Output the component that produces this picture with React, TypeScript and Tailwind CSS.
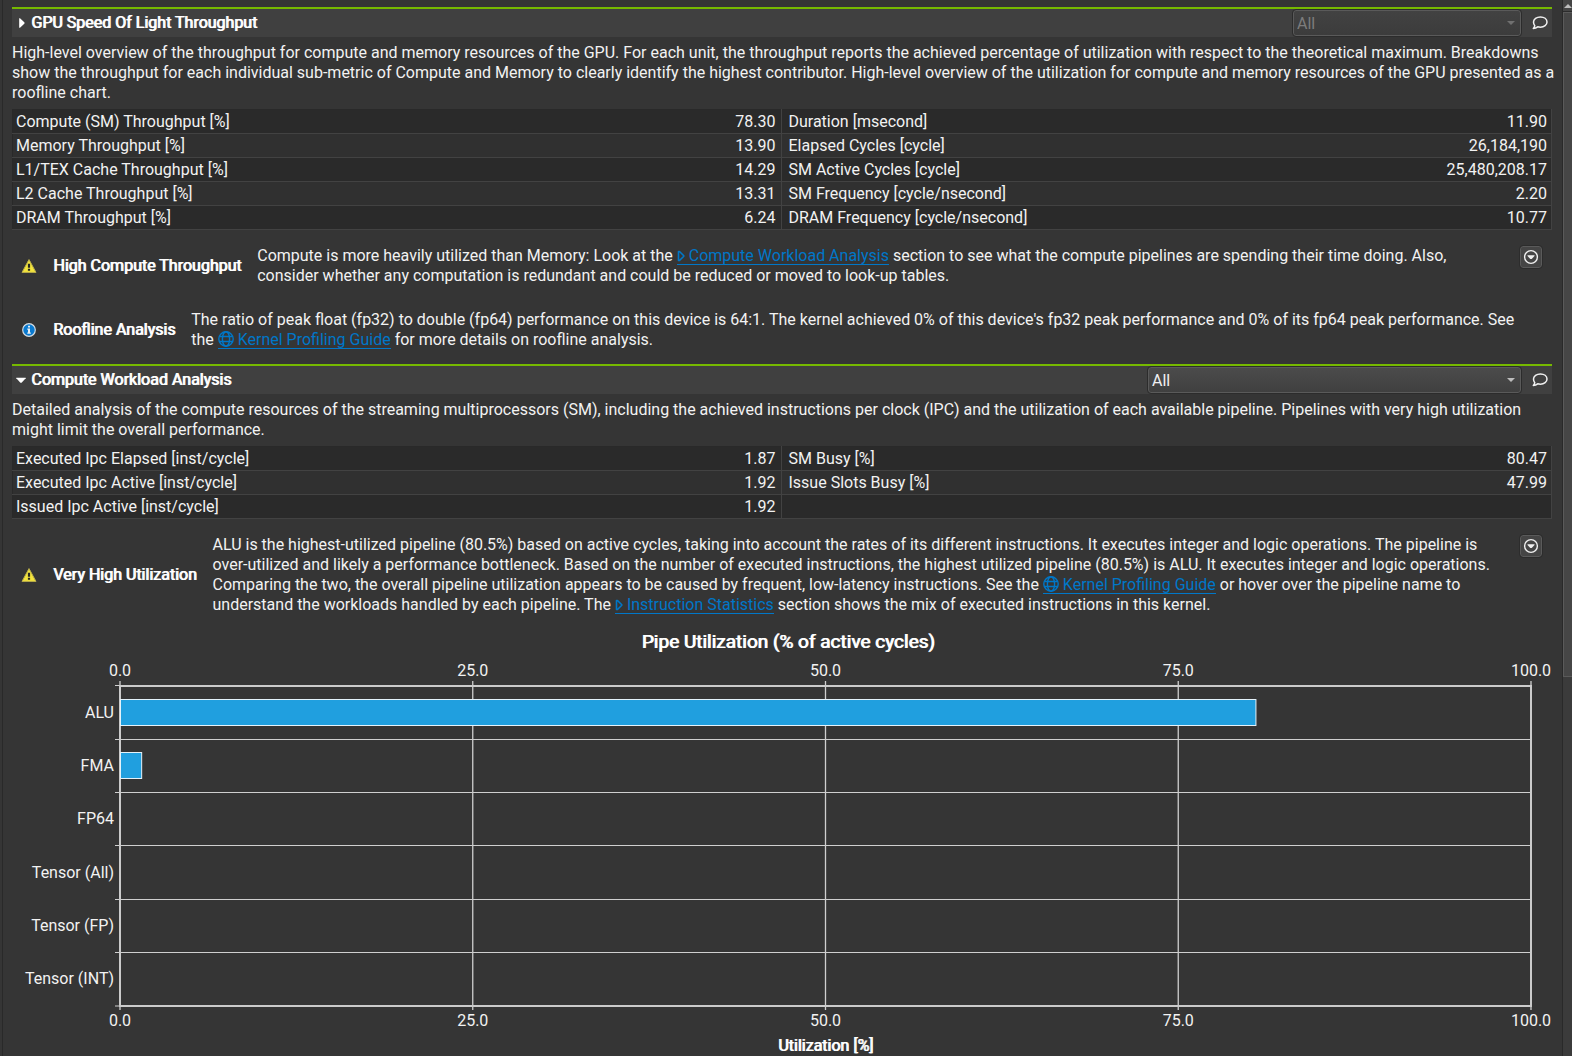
import type { ReactNode } from "react";

type Row = [string, string, string, string];

const lightRows: Row[] = [
  ["Compute (SM) Throughput [%]", "78.30", "Duration [msecond]", "11.90"],
  ["Memory Throughput [%]", "13.90", "Elapsed Cycles [cycle]", "26,184,190"],
  ["L1/TEX Cache Throughput [%]", "14.29", "SM Active Cycles [cycle]", "25,480,208.17"],
  ["L2 Cache Throughput [%]", "13.31", "SM Frequency [cycle/nsecond]", "2.20"],
  ["DRAM Throughput [%]", "6.24", "DRAM Frequency [cycle/nsecond]", "10.77"],
];

const computeRows: Row[] = [
  ["Executed Ipc Elapsed [inst/cycle]", "1.87", "SM Busy [%]", "80.47"],
  ["Executed Ipc Active [inst/cycle]", "1.92", "Issue Slots Busy [%]", "47.99"],
  ["Issued Ipc Active [inst/cycle]", "1.92", "", ""],
];

const pipes = [
  { name: "ALU", value: 80.47 },
  { name: "FMA", value: 1.5 },
  { name: "FP64", value: 0 },
  { name: "Tensor (All)", value: 0 },
  { name: "Tensor (FP)", value: 0 },
  { name: "Tensor (INT)", value: 0 },
];

const ticks = [0, 25, 50, 75, 100];

// Double-struck regular weight, the way the tool's headings are emboldened.
const strong = "font-normal text-white [text-shadow:1px_0_currentColor]";

function CommentIcon() {
  return (
    <svg width="16" height="14" viewBox="0 0 16 14" fill="none" stroke="#f0f0f0" strokeWidth="1.5" strokeLinejoin="round">
      <path d="M8.400 .9c3.800 0 6.600 2.200 6.600 5.100s-2.800 5.200-6.600 5.200c-1 0-1.900-.1-2.700-.4-1.100.9-2.600 1.600-4.400 1.700.8-.8 1.300-1.700 1.500-2.800C1.900 8.700 1.500 7.500 1.500 6 1.500 3.100 4.600.9 8.400.9Z" />
    </svg>
  );
}

function WarningIcon() {
  return (
    <svg width="16" height="16" viewBox="0 0 16 16" aria-label="Warning">
      <path d="M8 1.600 15 14.400H1Z" fill="#f3e43c" stroke="#b9ad4a" strokeWidth="1" strokeLinejoin="round" />
      <path d="M6.900 5.800h2.200v4H6.900ZM6.900 10.800h2.200v2H6.900Z" fill="#2a2a20" />
    </svg>
  );
}

function InfoIcon() {
  return (
    <svg width="16" height="16" viewBox="0 0 16 16" aria-label="Information">
      <circle cx="8" cy="8" r="6.300" fill="#0a7ad0" stroke="#d5dde3" strokeWidth="1.200" />
      <path d="M7 3.800h2v1.800H7ZM6.300 6.600H9v4h.8v1.200H6.300v-1.200H7V7.700h-.7Z" fill="#e8eef2" />
    </svg>
  );
}

function GlobeIcon() {
  return (
    <svg className="inline-block align-[-2px]" width="16" height="16" viewBox="0 0 16 16" fill="none" stroke="#0077c8" strokeWidth="1.400">
      <circle cx="8" cy="8" r="7.200" />
      <ellipse cx="8" cy="8" rx="3.600" ry="7.200" />
      <path d="M1.400 5.500h13.200M1.400 10.500h13.200" />
    </svg>
  );
}

function SectionIcon() {
  return (
    <svg className="inline-block align-[-1px]" width="8" height="12" viewBox="0 0 8 12" fill="none" stroke="#0077c8" strokeWidth="1.600" strokeLinejoin="round">
      <path d="M1.500 1.500v9h1L6.800 6.300v-.6L2.500 1.500Z" />
    </svg>
  );
}

function TextLink({ icon, children }: { icon: ReactNode; children: ReactNode }) {
  return (
    <a href="#" className="text-[#0077c8] shadow-[inset_0_-1px_#0077c8]">
      {icon} {children}
    </a>
  );
}

function SectionHeader({ title, open, disabled, selectClass }: { title: string; open: boolean; disabled?: boolean; selectClass: string }) {
  return (
    <header className="flex h-[30px] items-center border-t-2 border-[#76b900] bg-[#404040] pr-1 pl-1">
      <button type="button" aria-expanded={open} className="flex items-center gap-[5px]">
        <svg width="10" height="10" viewBox="0 0 10 10" fill="#ffffff">
          {open ? <path d="M.3 2.700h9.400v.6L5.600 7.800H4.400L.3 3.300Z" /> : <path d="M3.200 .3v9.400h.8L8.500 5.500v-1L4 .3Z" />}
        </svg>
        <h2 className={strong}>{title}</h2>
      </button>
      <div className={`relative ml-auto ${selectClass}`}>
        <select
          aria-label={`${title} view`}
          disabled={disabled}
          className="block h-[26px] w-full appearance-none rounded-[3px] border border-[#5a5a5a] bg-linear-to-b from-[#4b4b4b] to-[#404040] px-[3px] pt-px text-[#f0f0f0] outline outline-[#2c2c2c] disabled:from-[#424242] disabled:to-[#3c3c3c] disabled:text-[#7c7c7c] disabled:opacity-100"
        >
          <option>All</option>
        </select>
        <svg className="pointer-events-none absolute top-[11px] right-[6px]" width="8" height="4" viewBox="0 0 8 4" fill={disabled ? "#707070" : "#bdbdbd"}>
          <path d="M0 0h8L4 4Z" />
        </svg>
      </div>
      <button type="button" aria-label="Add comment" className="ml-[11px]">
        <CommentIcon />
      </button>
    </header>
  );
}

function MetricTable({ rows }: { rows: Row[] }) {
  return (
    <table className="mt-[6px] w-full table-fixed border-collapse border border-[#292929]">
      <tbody>
        {rows.map((r) => (
          <tr key={r[0]} className="h-6 border-b border-[#424242] odd:bg-[#2a2a2a] even:bg-[#303030]">
            <td className="w-[36%] pl-[3px]">{r[0]}</td>
            <td className="w-[14%] border-r border-[#424242] pr-[6px] text-right">{r[1]}</td>
            <td className="w-[36%] pl-[6px]">{r[2]}</td>
            <td className="w-[14%] border-r border-[#424242] pr-1 text-right">{r[3]}</td>
          </tr>
        ))}
      </tbody>
    </table>
  );
}

function Advice({ icon, title, action, children }: { icon: ReactNode; title: string; action?: boolean; children: ReactNode }) {
  return (
    <div className="flex gap-4 pr-[10px] pl-[9px]">
      <div className="flex shrink-0 items-center gap-4">
        {icon}
        <h3 className={`whitespace-nowrap ${strong}`}>{title}</h3>
      </div>
      <p className={action ? "flex-1" : "flex-1 pr-4"}>{children}</p>
      {action && (
        <button
          type="button"
          aria-label="Show details"
          className="flex h-[22px] w-[22px] items-center justify-center rounded-[3px] border border-[#5a5a5a] bg-[#454545] outline outline-[#2c2c2c]"
        >
          <svg className="shrink-0" width="16" height="16" viewBox="0 0 16 16">
            <circle cx="8" cy="8" r="6.400" fill="none" stroke="#f0f0f0" strokeWidth="1.400" />
            <path d="M4.500 6.300h7v.7L8.700 10H7.300L4.500 7Z" fill="#f0f0f0" />
          </svg>
        </button>
      )}
    </div>
  );
}

function TickLabels() {
  return (
    <div className="ml-[108px] flex justify-between pr-[21px] leading-5">
      {ticks.map((t) => (
        <span key={t} className="flex w-0 justify-center">
          {t.toFixed(1)}
        </span>
      ))}
    </div>
  );
}

function PipeChart() {
  const step = 320 / pipes.length;
  return (
    <figure className="mt-[15px]">
      <figcaption className={`pl-3 text-center text-[19px] leading-6 ${strong}`}>Pipe Utilization (% of active cycles)</figcaption>
      <div className="mt-[7px] mb-[5px]">
        <TickLabels />
      </div>
      <div className="flex pr-[21px]">
        <ul className="flex h-80 w-[108px] shrink-0 flex-col pr-[6px] text-right">
          {pipes.map((p) => (
            <li key={p.name} className="flex flex-1 items-center justify-end">
              {p.name}
            </li>
          ))}
        </ul>
        <svg className="h-80 min-w-0 flex-1 overflow-visible" role="img" aria-label="Pipe utilization bars">
          <g stroke="#cfcfcf" strokeWidth="1">
            {pipes.map((p, i) => (
              <line key={p.name} x1="-5" x2="100%" y1={Math.ceil(i * step) - 0.5} y2={Math.ceil(i * step) - 0.5} />
            ))}
            <line x1="-5" x2="0" y1="320" y2="320" />
            {ticks.map((t) => (
              <line key={t} x1={`${t}%`} x2={`${t}%`} y1="-5" y2="324" strokeWidth="1.300" />
            ))}
          </g>
          <rect x="0" y="0" width="100%" height="320" fill="none" stroke="#cbcbcb" strokeWidth="2" />
          {pipes.map(
            (p, i) =>
              p.value > 0 && (
                <rect key={p.name} x="0.5" y={Math.round(i * step) + 13.5} width={`${p.value}%`} height="26" fill="#209fdf" stroke="#e4f2fa" />
              ),
          )}
        </svg>
      </div>
      <div className="mt-[5px]">
        <TickLabels />
      </div>
      <p className={`mt-[5px] pr-[21px] pl-[108px] text-center ${strong}`}>Utilization [%]</p>
    </figure>
  );
}

export default function App() {
  return (
    <div className="flex h-screen overflow-hidden bg-[#353535] font-[Roboto,sans-serif] text-base leading-5 text-[#f2f2f2]">
      <main className="ml-[2px] min-w-0 flex-1 border-l border-[#292929] pt-[7px] pr-[10px] pl-[9px]">
        <section>
          <SectionHeader title="GPU Speed Of Light Throughput" open={false} disabled selectClass="w-[228px]" />
          <p className="-mr-1 mt-[6px]">
            High-level overview of the throughput for compute and memory resources of the GPU. For each unit, the throughput reports the achieved
            percentage of utilization with respect to the theoretical maximum. Breakdowns show the throughput for each individual sub-metric of
            Compute and Memory to clearly identify the highest contributor. High-level overview of the utilization for compute and memory resources
            of the GPU presented as a roofline chart.
          </p>
          <MetricTable rows={lightRows} />
          <div className="mt-4 flex flex-col gap-6">
            <Advice icon={<WarningIcon />} title="High Compute Throughput" action>
              Compute is more heavily utilized than Memory: Look at the <TextLink icon={<SectionIcon />}>Compute Workload Analysis</TextLink> section
              to see what the compute pipelines are spending their time doing. Also, consider whether any computation is redundant and could be
              reduced or moved to look-up tables.
            </Advice>
            <Advice icon={<InfoIcon />} title="Roofline Analysis">
              The ratio of peak float (fp32) to double (fp64) performance on this device is 64:1. The kernel achieved 0% of this device's fp32 peak
              performance and 0% of its fp64 peak performance. See the <TextLink icon={<GlobeIcon />}>Kernel Profiling Guide</TextLink> for more
              details on roofline analysis.
            </Advice>
          </div>
        </section>
        <section className="mt-[14px]">
          <SectionHeader title="Compute Workload Analysis" open selectClass="w-[373px]" />
          <p className="-mr-1 mt-[6px]">
            Detailed analysis of the compute resources of the streaming multiprocessors (SM), including the achieved instructions per clock (IPC) and
            the utilization of each available pipeline. Pipelines with very high utilization might limit the overall performance.
          </p>
          <MetricTable rows={computeRows} />
          <div className="mt-4">
            <Advice icon={<WarningIcon />} title="Very High Utilization" action>
              ALU is the highest-utilized pipeline (80.5%) based on active cycles, taking into account the rates of its different instructions. It
              executes integer and logic operations. The pipeline is over-utilized and likely a performance bottleneck. Based on the number of
              executed instructions, the highest utilized pipeline (80.5%) is ALU. It executes integer and logic operations. Comparing the two, the
              overall pipeline utilization appears to be caused by frequent, low-latency instructions. See the{" "}
              <TextLink icon={<GlobeIcon />}>Kernel Profiling Guide</TextLink> or hover over the pipeline name to understand the workloads handled by
              each pipeline. The <TextLink icon={<SectionIcon />}>Instruction Statistics</TextLink> section shows the mix of executed instructions in
              this kernel.
            </Advice>
          </div>
          <PipeChart />
        </section>
      </main>
      <div className="flex w-[10px] shrink-0 flex-col border-l border-[#292929] bg-[#3b3b3b]" aria-hidden="true">
        <div className="flex h-3 items-center justify-center border-b border-[#2c2c2c] bg-[#454545]">
          <svg width="8" height="4" viewBox="0 0 8 4" fill="#bdbdbd">
            <path d="M0 4h8L4 0Z" />
          </svg>
        </div>
        <div className="h-[63%] border border-r-0 border-[#5a5a5a] bg-[#464646]" />
      </div>
    </div>
  );
}
